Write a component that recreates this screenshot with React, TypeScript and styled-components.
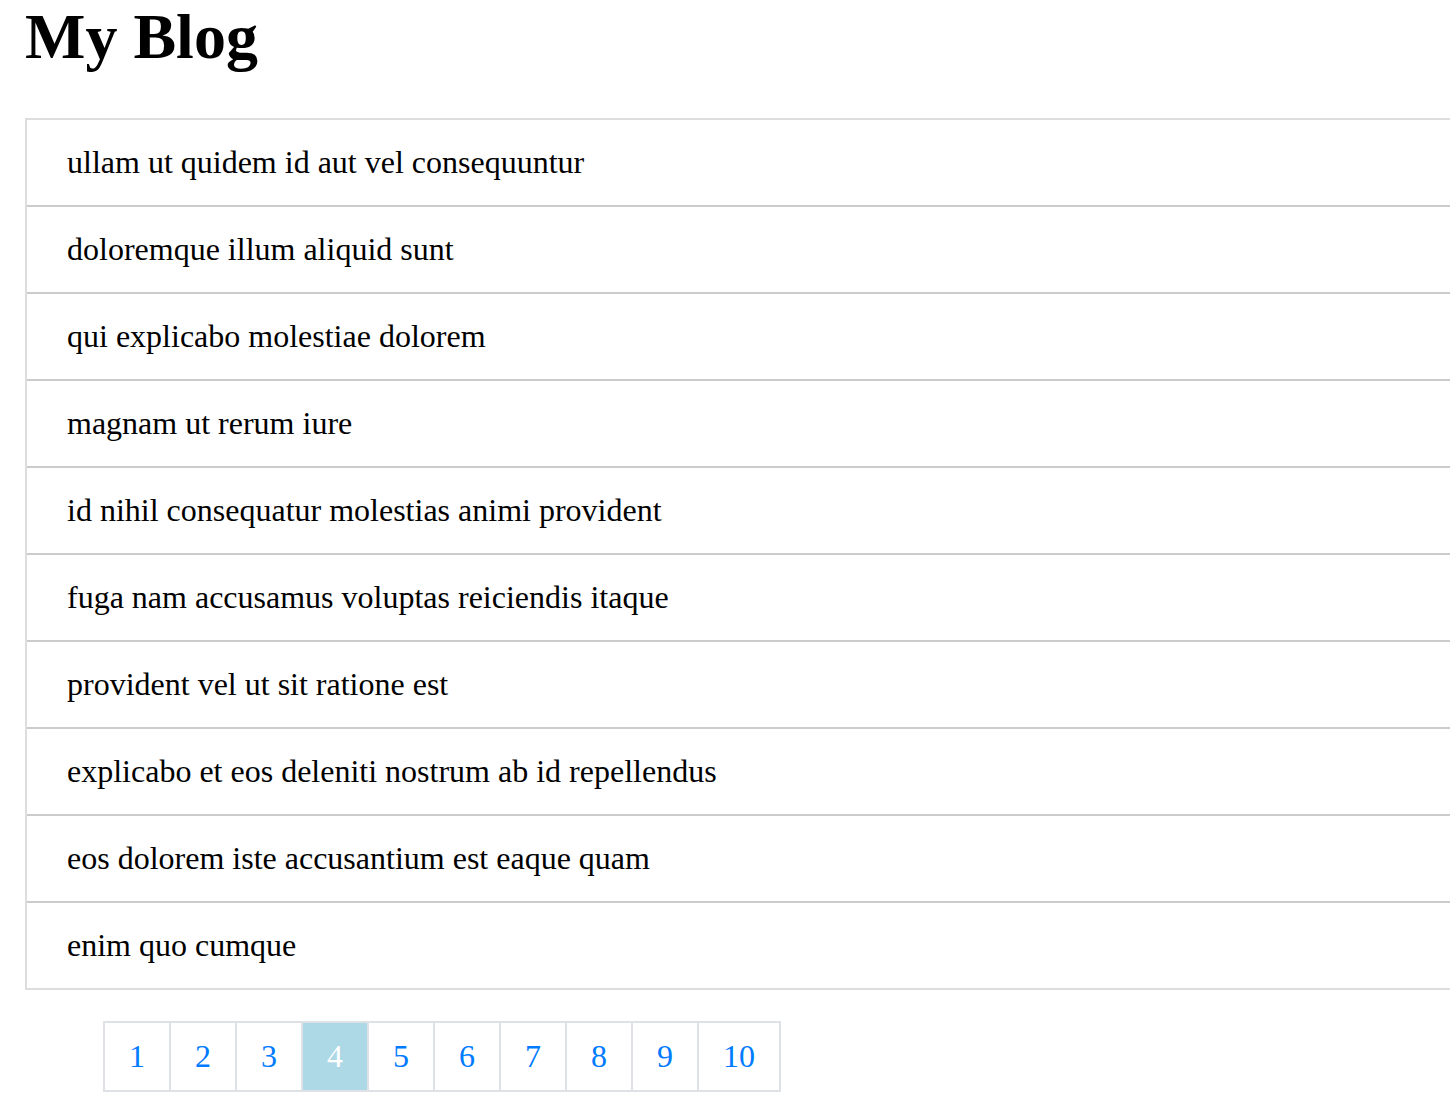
import React from "react";
import styled, { createGlobalStyle } from "styled-components";

const GlobalStyle = createGlobalStyle`
  html, body { margin: 0; padding: 0; background: #ffffff; overflow-x: hidden; }
  body { font-family: "Liberation Serif", "Times New Roman", serif; color: #000; }
`;

const Page = styled.div`
  padding: 0 0 0 25px;
`;

const Title = styled.h1`
  margin: 0;
  padding: 0;
  font-size: 64px;
  font-weight: bold;
  line-height: 74px;
  height: 118px;
  box-sizing: border-box;
`;

const List = styled.ul`
  list-style: none;
  margin: 0;
  padding: 0;
  border: 2px solid #dddddd;
  border-right: none;
  width: calc(100% + 20px);
`;

const Row = styled.li<{ $last?: boolean }>`
  font-size: 32px;
  line-height: 37px;
  padding: 24px 40px;
  border-bottom: ${(p) => (p.$last ? "none" : "2px solid #cccccc")};
`;

const Pager = styled.ul`
  display: flex;
  list-style: none;
  margin: 31px 0 0 0;
  padding: 0 0 0 78px;
`;

const PageItem = styled.li<{ $active?: boolean; $first?: boolean }>`
  margin-left: ${(p) => (p.$first ? "0" : "-2px")};
  padding: 13px 24px 14px;
  font-size: 32px;
  line-height: 40px;
  border: 2px solid #dee2e6;
  background: ${(p) => (p.$active ? "#add8e6" : "#ffffff")};
  color: ${(p) => (p.$active ? "#ffffff" : "#007bff")};
  position: relative;
`;

const titles = [
  "ullam ut quidem id aut vel consequuntur",
  "doloremque illum aliquid sunt",
  "qui explicabo molestiae dolorem",
  "magnam ut rerum iure",
  "id nihil consequatur molestias animi provident",
  "fuga nam accusamus voluptas reiciendis itaque",
  "provident vel ut sit ratione est",
  "explicabo et eos deleniti nostrum ab id repellendus",
  "eos dolorem iste accusantium est eaque quam",
  "enim quo cumque",
];

export default function App() {
  return (
    <>
      <GlobalStyle />
      <Page>
        <Title>My Blog</Title>
        <List>
          {titles.map((t, i) => (
            <Row key={t} $last={i === titles.length - 1}>
              {t}
            </Row>
          ))}
        </List>
        <Pager>
          {Array.from({ length: 10 }, (_, i) => (
            <PageItem key={i} $first={i === 0} $active={i === 3}>
              {i + 1}
            </PageItem>
          ))}
        </Pager>
      </Page>
    </>
  );
}
